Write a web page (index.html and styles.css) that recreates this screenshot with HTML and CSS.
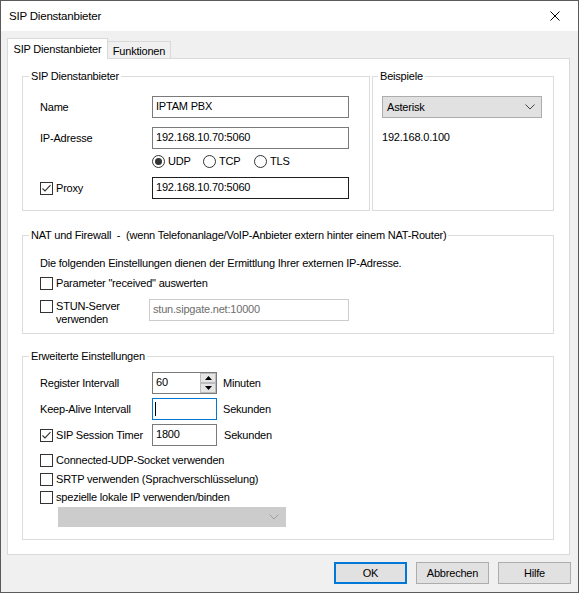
FILE: index.html
```html
<!DOCTYPE html>
<html lang="de">
<head>
<meta charset="utf-8">
<title>SIP Dienstanbieter</title>
<link rel="stylesheet" href="styles.css">
</head>
<body>
<div class="window">
  <div class="titlebar">
    <span class="title">SIP Dienstanbieter</span>
    <svg class="close" width="10" height="10" viewBox="0 0 10 10"><path d="M0.5 0.5 L9.5 9.5 M9.5 0.5 L0.5 9.5" stroke="#000" stroke-width="1" fill="none"/></svg>
  </div>
  <div class="body">
    <div class="tabs">
      <div class="tab active">SIP Dienstanbieter</div>
      <div class="tab">Funktionen</div>
    </div>
    <div class="panel">
      <div class="row-top">
        <div class="group g-sip">
          <div class="legend">SIP Dienstanbieter</div>
          <div class="frow r-name"><span class="lbl">Name</span><div class="input w197">IPTAM PBX</div></div>
          <div class="frow r-ip"><span class="lbl">IP-Adresse</span><div class="input w197">192.168.10.70:5060</div></div>
          <div class="radios">
            <div class="radio-item"><span class="radio on"></span><span>UDP</span></div>
            <div class="radio-item"><span class="radio"></span><span>TCP</span></div>
            <div class="radio-item"><span class="radio"></span><span>TLS</span></div>
          </div>
          <div class="frow r-proxy">
            <span class="lbl cblbl"><svg class="cb" width="13" height="13" viewBox="0 0 13 13"><rect x="0.5" y="0.5" width="12" height="12" fill="#fff" stroke="#333"/><path d="M2.5 6.5 L5 9 L10.5 3.2" stroke="#333" stroke-width="1.1" fill="none"/></svg>Proxy</span>
            <div class="input w197 dark">192.168.10.70:5060</div>
          </div>
        </div>
        <div class="group g-bsp">
          <div class="legend">Beispiele</div>
          <div class="select">
            <span>Asterisk</span>
            <svg width="10" height="6" viewBox="0 0 10 6"><path d="M0.5 0.5 L5 5 L9.5 0.5" stroke="#444" stroke-width="1" fill="none"/></svg>
          </div>
          <div class="ipnote">192.168.0.100</div>
        </div>
      </div>

      <div class="group g-nat">
        <div class="legend">NAT und Firewall&nbsp; - &nbsp;(wenn Telefonanlage/VoIP-Anbieter extern hinter einem NAT-Router)</div>
        <div class="line l-info">Die folgenden Einstellungen dienen der Ermittlung Ihrer externen IP-Adresse.</div>
        <div class="line l-param"><svg class="cb" width="13" height="13" viewBox="0 0 13 13"><rect x="0.5" y="0.5" width="12" height="12" fill="#fff" stroke="#333"/></svg>Parameter "received" auswerten</div>
        <div class="stun">
          <div class="stun-lbl"><svg class="cb" width="13" height="13" viewBox="0 0 13 13"><rect x="0.5" y="0.5" width="12" height="12" fill="#fff" stroke="#333"/></svg><span>STUN-Server<br>verwenden</span></div>
          <div class="input w200 disabled">stun.sipgate.net:10000</div>
        </div>
      </div>

      <div class="group g-erw">
        <div class="legend">Erweiterte Einstellungen</div>
        <div class="frow r-reg">
          <span class="lbl">Register Intervall</span>
          <div class="input w65 spin">60
            <div class="spinbtns">
              <span class="sb"><svg width="7" height="4" viewBox="0 0 7 4"><path d="M0 4 L3.5 0 L7 4 Z" fill="#000"/></svg></span>
              <span class="sb"><svg width="7" height="4" viewBox="0 0 7 4"><path d="M0 0 L3.5 4 L7 0 Z" fill="#000"/></svg></span>
            </div>
          </div>
          <span class="unit">Minuten</span>
        </div>
        <div class="frow r-keep">
          <span class="lbl">Keep-Alive Intervall</span>
          <div class="input w65 focus"><span class="caret"></span></div>
          <span class="unit">Sekunden</span>
        </div>
        <div class="frow r-sess">
          <span class="lbl cblbl"><svg class="cb" width="13" height="13" viewBox="0 0 13 13"><rect x="0.5" y="0.5" width="12" height="12" fill="#fff" stroke="#333"/><path d="M2.5 6.5 L5 9 L10.5 3.2" stroke="#333" stroke-width="1.1" fill="none"/></svg>SIP Session Timer</span>
          <div class="input w65">1800</div>
          <span class="unit u2">Sekunden</span>
        </div>
        <div class="line l-udp"><svg class="cb" width="13" height="13" viewBox="0 0 13 13"><rect x="0.5" y="0.5" width="12" height="12" fill="#fff" stroke="#333"/></svg>Connected-UDP-Socket verwenden</div>
        <div class="line l-srtp"><svg class="cb" width="13" height="13" viewBox="0 0 13 13"><rect x="0.5" y="0.5" width="12" height="12" fill="#fff" stroke="#333"/></svg>SRTP verwenden (Sprachverschlüsselung)</div>
        <div class="line l-ip"><svg class="cb" width="13" height="13" viewBox="0 0 13 13"><rect x="0.5" y="0.5" width="12" height="12" fill="#fff" stroke="#333"/></svg>spezielle lokale IP verwenden/binden</div>
        <div class="select disabled-select">
          <span></span>
          <svg width="10" height="6" viewBox="0 0 10 6"><path d="M0.5 0.5 L5 5 L9.5 0.5" stroke="#a0a0a0" stroke-width="1" fill="none"/></svg>
        </div>
      </div>
    </div>
    <div class="buttons">
      <div class="btn default">OK</div>
      <div class="btn">Abbrechen</div>
      <div class="btn">Hilfe</div>
    </div>
  </div>
</div>
</body>
</html>
```

FILE: styles.css
```css
* { box-sizing: border-box; }
html, body { margin: 0; padding: 0; }
body {
  font-family: "Liberation Sans", Arial, sans-serif;
  font-size: 11px;
  letter-spacing: -0.2px;
  color: #000;
  background: #fff;
}
.window {
  width: 579px;
  height: 593px;
  border: 1px solid #5b5b5b;
  display: flex;
  flex-direction: column;
}
.titlebar {
  height: 30px;
  background: #fff;
  display: flex;
  align-items: center;
  justify-content: space-between;
  padding: 0 18px 0 8px;
  flex: none;
}
.title { font-size: 11.5px; line-height: 14px; }
.close { display: block; }
.body {
  flex: 1;
  background: #f0f0f0;
  padding: 7px 7px 8px 6px;
  display: flex;
  flex-direction: column;
}
.tabs {
  height: 20px;
  display: flex;
  align-items: flex-end;
  flex: none;
}
.tab {
  border: 1px solid #d9d9d9;
  border-bottom: none;
  line-height: 14px;
  text-align: center;
  white-space: nowrap;
}
.tab.active {
  width: 101px;
  height: 21px;
  margin-bottom: -1px;
  background: #fff;
  padding-top: 3px;
  position: relative;
  z-index: 1;
}
.tab:not(.active) {
  width: 63px;
  height: 17px;
  background: #f0f0f0;
  border-left: none;
  padding-top: 2px;
}
.panel {
  height: 497px;
  width: 563px;
  border: 1px solid #d9d9d9;
  background: #fff;
  padding: 17px 0 0 14px;
  flex: none;
}
.row-top {
  display: flex;
  gap: 2px;
}
.group {
  border: 1px solid #dcdcdc;
  padding-left: 17px;
}
.legend {
  margin-top: -8px;
  margin-left: -11px;
  padding: 0 2px;
  line-height: 14px;
  height: 14px;
  background: #fff;
  width: fit-content;
  white-space: nowrap;
}
.g-sip { width: 348px; height: 135px; }
.g-bsp { width: 182px; height: 135px; padding-left: 9px; }
.g-bsp .legend { margin-left: -4px; }
.frow {
  display: flex;
  align-items: center;
}
.lbl {
  width: 112px;
  flex: none;
  white-space: nowrap;
}
.cblbl {
  display: flex;
  align-items: center;
}
.cb { display: block; flex: none; margin-right: 3px; }
.input {
  height: 22px;
  border: 1px solid #7a7a7a;
  background: #fff;
  padding: 0 0 0 3px;
  line-height: 18px;
  white-space: nowrap;
  position: relative;
}
.input.dark { border-color: #1e1e1e; }
.input.focus { border-color: #0078d7; }
.input.disabled { border-color: #cccccc; color: #6d6d6d; }
.w197 { width: 197px; }
.w200 { width: 200px; }
.w65 { width: 65px; }
.r-name { margin-top: 13px; }
.r-ip { margin-top: 9px; }
.radios {
  margin-top: 5px;
  padding-left: 112px;
  display: flex;
  height: 14px;
  line-height: 14px;
}
.radio-item {
  width: 51px;
  display: flex;
  align-items: center;
}
.radio {
  width: 13px;
  height: 13px;
  border: 1px solid #333;
  border-radius: 50%;
  margin-right: 3px;
  display: flex;
  align-items: center;
  justify-content: center;
  flex: none;
}
.radio.on::after {
  content: "";
  width: 7px;
  height: 7px;
  border-radius: 50%;
  background: #333;
}
.r-proxy { margin-top: 9px; }
.select {
  margin-top: 13px;
  width: 160px;
  height: 22px;
  background: #e1e1e1;
  border: 1px solid #adadad;
  display: flex;
  align-items: center;
  justify-content: space-between;
  padding: 0 6px 0 4px;
  line-height: 20px;
}
.select svg { display: block; }
.ipnote {
  margin-top: 12px;
  line-height: 14px;
}
.g-nat {
  margin-top: 24px;
  width: 532px;
  height: 99px;
}
.line {
  display: flex;
  align-items: center;
  line-height: 14px;
  height: 14px;
  white-space: nowrap;
}
.l-info { margin-top: 14px; }
.l-param { margin-top: 6px; }
.stun {
  margin-top: 9px;
  display: flex;
  align-items: flex-start;
}
.stun-lbl {
  width: 109px;
  display: flex;
  align-items: flex-start;
  margin-top: 1px;
  line-height: 13px;
}
.g-erw {
  margin-top: 22px;
  width: 532px;
  height: 184px;
}
.r-reg { margin-top: 9px; }
.r-keep { margin-top: 4px; }
.r-sess { margin-top: 4px; }
.unit { margin-left: 6px; }
.unit.u2 { margin-left: 7px; }
.spinbtns {
  position: absolute;
  top: 0;
  right: 0;
  width: 16px;
  height: 20px;
  display: flex;
  flex-direction: column;
}
.sb {
  height: 10px;
  background: #e5e5e5;
  border: 1px solid #bcbcbc;
  display: flex;
  align-items: center;
  justify-content: center;
}
.sb svg { display: block; }
.caret {
  position: absolute;
  left: 2px;
  top: 3px;
  width: 1px;
  height: 14px;
  background: #000;
}
.l-udp { margin-top: 7px; }
.l-srtp { margin-top: 5px; }
.l-ip { margin-top: 4px; }
.disabled-select {
  margin-top: 3px;
  margin-left: 18px;
  width: 228px;
  height: 20px;
  background: #cccccc;
  border-color: #cccccc;
}
.buttons {
  margin-top: 7px;
  display: flex;
  justify-content: flex-end;
  gap: 9px;
  flex: none;
}
.btn {
  width: 73px;
  height: 22px;
  background: #e1e1e1;
  border: 1px solid #adadad;
  display: flex;
  align-items: center;
  justify-content: center;
  line-height: 14px;
}
.btn.default {
  border: 2px solid #0078d7;
}
```
